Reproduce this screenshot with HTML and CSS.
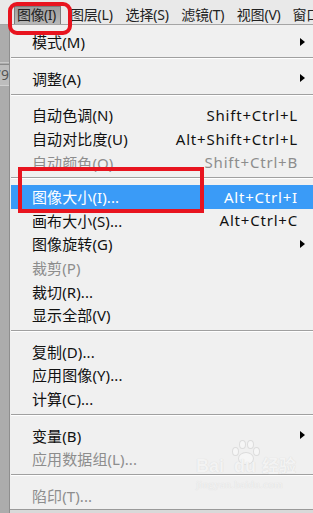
FILE: index.html
```html
<!DOCTYPE html>
<html>
<head>
<meta charset="utf-8">
<link rel="stylesheet" href="styles.css">
</head>
<body>
<div class="page">
  <div class="menubar">
    <span class="top active">图像(I)</span>
    <span class="top">图层(L)</span>
    <span class="top">选择(S)</span>
    <span class="top">滤镜(T)</span>
    <span class="top">视图(V)</span>
    <span class="top">窗口</span>
  </div>
  <div class="main">
    <div class="strip">
      <div class="strip-top"></div>
      <div class="strip-box"><span class="strip-num">79</span></div>
    </div>
    <div class="menu">
      <div class="row"><span class="lbl">模式(M)</span><span class="sc"></span><span class="arr"></span></div>
      <div class="sep"></div>
      <div class="row"><span class="lbl">调整(A)</span><span class="sc"></span><span class="arr"></span></div>
      <div class="sep"></div>
      <div class="row"><span class="lbl">自动色调(N)</span><span class="sc">Shift+Ctrl+L</span></div>
      <div class="row"><span class="lbl">自动对比度(U)</span><span class="sc">Alt+Shift+Ctrl+L</span></div>
      <div class="row dis"><span class="lbl">自动颜色(O)</span><span class="sc">Shift+Ctrl+B</span></div>
      <div class="sep sep-tight"></div>
      <div class="row hl"><span class="lbl">图像大小(I)...</span><span class="sc">Alt+Ctrl+I</span></div>
      <div class="row"><span class="lbl">画布大小(S)...</span><span class="sc">Alt+Ctrl+C</span></div>
      <div class="row"><span class="lbl">图像旋转(G)</span><span class="sc"></span><span class="arr"></span></div>
      <div class="row dis"><span class="lbl">裁剪(P)</span></div>
      <div class="row"><span class="lbl">裁切(R)...</span></div>
      <div class="row"><span class="lbl">显示全部(V)</span></div>
      <div class="sep"></div>
      <div class="row"><span class="lbl">复制(D)...</span></div>
      <div class="row"><span class="lbl">应用图像(Y)...</span></div>
      <div class="row"><span class="lbl">计算(C)...</span></div>
      <div class="sep"></div>
      <div class="row"><span class="lbl">变量(B)</span><span class="sc"></span><span class="arr"></span></div>
      <div class="row dis"><span class="lbl">应用数据组(L)...</span></div>
      <div class="sep"></div>
      <div class="row dis"><span class="lbl">陷印(T)...</span></div>
    </div>
  </div>
  <div class="redbox redbox-tab"></div>
  <div class="redbox redbox-item"></div>
  <div class="watermark">
    <div class="wm-paw">
      <span class="toe t1"></span><span class="toe t2"></span><span class="toe t3"></span><span class="toe t4"></span><span class="pad"></span>
    </div>
    <div class="wm-logo">Bai<span class="wm-du">du</span><span class="wm-cn">经验</span></div>
    <div class="wm-url">jingyan.baidu.com</div>
  </div>
</div>
</body>
</html>
```

FILE: styles.css
```css
* { box-sizing: border-box; }
html, body { margin: 0; padding: 0; }
body {
  width: 313px;
  height: 513px;
  overflow: hidden;
  background: #d9d9d9;
  font-family: "Noto Sans", "Noto Sans CJK SC", sans-serif;
  color: #111;
}
.page {
  position: relative;
  width: 313px;
  height: 513px;
  display: flex;
  flex-direction: column;
}
.menubar {
  height: 25px;
  flex: none;
  background: #e9e9e9;
  border-bottom: 1px solid #a5a5a5;
  display: flex;
  align-items: flex-end;
  padding-left: 14px;
  font-size: 14px;
  line-height: 18px;
  color: #222;
  overflow: hidden;
}
.top {
  flex: none;
  width: 55.6px;
  height: 18px;
  white-space: nowrap;
  letter-spacing: -0.2px;
}
.top.active {
  width: 47px;
  margin-right: 9px;
  padding-left: 2px;
  background: linear-gradient(#9d9d9d, #b9b9b9);
  border: 1px solid #7c7c7c;
  border-bottom: none;
  line-height: 16px;
  letter-spacing: -0.5px;
  color: #222;
}
.main {
  flex: 1;
  display: flex;
  min-height: 0;
}
.strip {
  width: 10px;
  flex: none;
  background: #acacac;
  border-right: 1px solid #8e8e8e;
  display: flex;
  flex-direction: column;
  overflow: hidden;
}
.strip-top {
  height: 38px;
  border-bottom: 1px solid #c8c8c8;
}
.strip-box {
  margin-top: 1px;
  height: 22px;
  background: #bdbdbd;
  border-top: 1px solid #8a8a8a;
  border-bottom: 1px solid #d0d0d0;
  font-size: 14px;
  line-height: 20px;
  color: #555;
  overflow: hidden;
  white-space: nowrap;
  position: relative;
}
.strip-num {
  position: absolute;
  right: 0;
  top: 0;
}
.menu {
  flex: 1;
  height: 485px;
  background: #f0f0f0;
  border-bottom: 1px solid #9a9a9a;
  padding: 5px 0 0 1px;
  font-size: 15px;
}
.row {
  height: 23.6px;
  display: grid;
  grid-template-columns: 1fr auto 16px;
  align-items: center;
  padding-left: 21px;
  white-space: nowrap;
  color: #111;
}
.row.dis { color: #8d8d8d; }
.row.hl { background: #3a9bf7; color: #fff; }
.lbl { letter-spacing: 0.1px; }
.sc { text-align: right; letter-spacing: 0.8px; margin-right: -1px; }
.arr {
  width: 0;
  height: 0;
  margin-left: 3px;
  border-left: 5px solid #000;
  border-top: 4.5px solid transparent;
  border-bottom: 4.5px solid transparent;
}
.sep {
  height: 13px;
  padding-top: 3.5px;
}
.sep.sep-tight {
  height: 11px;
  padding-top: 3px;
}
.sep::before {
  content: "";
  display: block;
  height: 1px;
  background: #a0a0a0;
  box-shadow: 0 1px 0 #ffffff;
}
.redbox {
  position: absolute;
  border: 4px solid #e8141f;
  pointer-events: none;
}
.redbox-tab {
  left: 8px;
  top: 2px;
  width: 64px;
  height: 33px;
  border-radius: 9px;
  border-width: 4.5px;
}
.redbox-item {
  left: 18px;
  top: 167px;
  width: 186px;
  height: 46px;
}
.watermark {
  position: absolute;
  left: 196px;
  top: 455px;
  width: 100px;
  color: #f4f4f4;
  opacity: 0.8;
  text-shadow: 0 0 1px #cfcfcf;
}
.wm-paw {
  position: absolute;
  left: 34px;
  top: -16px;
  width: 30px;
  height: 28px;
}
.toe, .pad {
  position: absolute;
  background: #f8f8f8;
  border: 1px solid #d8d8d8;
  border-radius: 50%;
}
.t1 { left: 2px; top: 8px; width: 7px; height: 9px; }
.t2 { left: 9px; top: 1px; width: 7px; height: 9px; }
.t3 { left: 17px; top: 1px; width: 7px; height: 9px; }
.t4 { left: 23px; top: 8px; width: 7px; height: 9px; }
.pad { left: 8px; top: 13px; width: 16px; height: 13px; }
.wm-logo {
  position: relative;
  font-family: "Liberation Sans", "Noto Sans CJK SC", sans-serif;
  font-weight: bold;
  font-size: 18px;
  line-height: 22px;
  white-space: nowrap;
}
.wm-du { margin-left: 10px; }
.wm-cn { margin-left: 6px; font-size: 17px; }
.wm-url {
  font-family: "Liberation Serif", serif;
  font-size: 11px;
  line-height: 13px;
  white-space: nowrap;
  letter-spacing: 0.3px;
}
```
